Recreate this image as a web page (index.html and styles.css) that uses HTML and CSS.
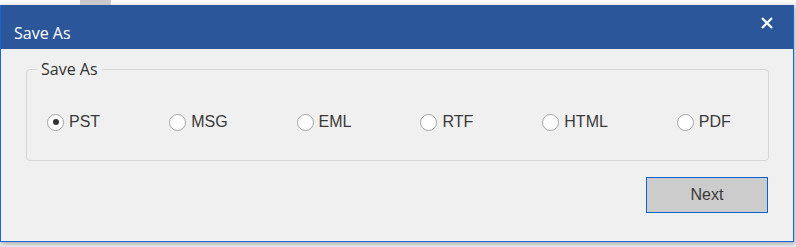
FILE: index.html
```html
<!DOCTYPE html>
<html>
<head>
<meta charset="utf-8">
<link rel="stylesheet" href="styles.css">
</head>
<body>
<div class="page">
  <div class="topstrip"><span class="tab"></span></div>
  <div class="dialog">
    <div class="titlebar">
      <span class="title">Save As</span>
      <button class="close" aria-label="Close">
        <svg width="12" height="12" viewBox="0 0 12 12"><path d="M1 1 L11 11 M11 1 L1 11" stroke="#fff" stroke-width="2.2" fill="none"/></svg>
      </button>
    </div>
    <div class="body">
      <fieldset class="group">
        <legend>Save As</legend>
        <div class="options">
          <label class="opt"><span class="radio checked"></span><span class="lbl">PST</span></label>
          <label class="opt"><span class="radio"></span><span class="lbl">MSG</span></label>
          <label class="opt"><span class="radio"></span><span class="lbl">EML</span></label>
          <label class="opt"><span class="radio"></span><span class="lbl">RTF</span></label>
          <label class="opt"><span class="radio"></span><span class="lbl">HTML</span></label>
          <label class="opt"><span class="radio"></span><span class="lbl">PDF</span></label>
        </div>
      </fieldset>
      <div class="actions"><button class="next">Next</button></div>
    </div>
  </div>
</div>
</body>
</html>
```
FILE: styles.css
```css
* { box-sizing: border-box; }
html, body { margin: 0; padding: 0; }
body {
  width: 796px;
  height: 247px;
  overflow: hidden;
  background: #e8eaec;
  font-family: "Liberation Sans", Arial, sans-serif;
}
.page { width: 796px; height: 247px; }
.topstrip {
  height: 5px;
  background: linear-gradient(#ffffff, #eeeeee);
  display: flex;
}
.tab {
  margin-left: 80px;
  width: 31px;
  height: 5px;
  background: #c9c9c9;
}
.dialog {
  width: 794px;
  height: 237px;
  background: #f0f0f0;
  border: 1px solid #1a66cc;
  border-top: none;
  box-shadow: 1px 2px 4px rgba(0,0,0,0.25);
}
.titlebar {
  height: 44px;
  background: #2b579a;
  display: flex;
  justify-content: space-between;
  align-items: flex-start;
  padding-left: 13px;
  padding-right: 20px;
}
.title {
  font-family: "Open Sans", "Noto Sans", sans-serif;
  font-size: 16px;
  color: #ffffff;
  line-height: 20px;
  margin-top: 18px;
}
.close {
  border: none;
  background: transparent;
  padding: 0;
  margin-top: 12px;
  width: 12px;
  height: 12px;
  display: flex;
}
.body { padding: 10px 24px 0 25px; }
.group {
  margin: 0;
  padding: 0;
  border: 1px solid #d6d6d6;
  border-radius: 4px;
  height: 102px;
}
.group legend {
  font-family: "Open Sans", "Noto Sans", sans-serif;
  font-size: 16px;
  line-height: 20px;
  color: #333333;
  padding: 0 4px;
  margin-left: 10px;
}
.options {
  display: flex;
  align-items: center;
  gap: 69px;
  padding-left: 20px;
  margin-top: 32px;
  height: 22px;
}
.opt {
  display: flex;
  align-items: center;
  gap: 5px;
}
.radio {
  width: 17px;
  height: 17px;
  border: 1px solid #a3a3a3;
  border-radius: 50%;
  background: #ffffff;
  display: flex;
  align-items: center;
  justify-content: center;
}
.radio.checked::after {
  content: "";
  width: 6px;
  height: 6px;
  border-radius: 50%;
  background: #333333;
}
.lbl {
  font-size: 16px;
  color: #3a3a3a;
  line-height: 20px;
}
.actions {
  display: flex;
  justify-content: flex-end;
  margin-top: 16px;
  padding-right: 1px;
}
.next {
  width: 122px;
  height: 36px;
  background: #cccccc;
  border: 1px solid #0a64cf;
  font-family: "Liberation Sans", Arial, sans-serif;
  font-size: 16px;
  color: #3a3a3a;
  padding: 0;
}
```
